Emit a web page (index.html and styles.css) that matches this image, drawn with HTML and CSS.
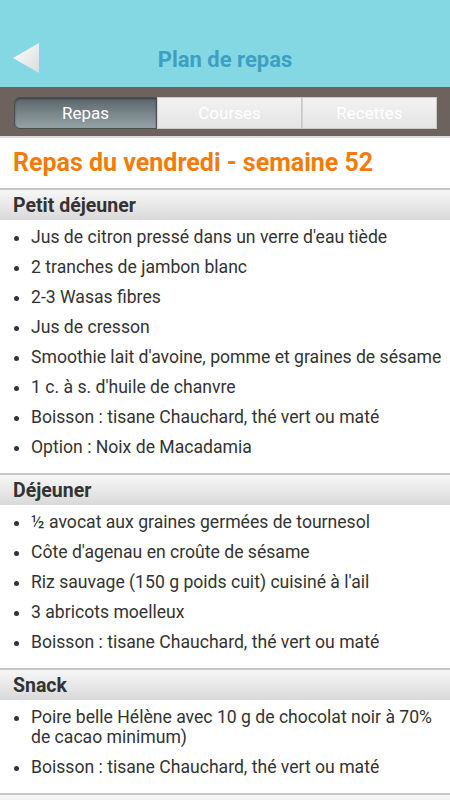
FILE: index.html
```html
<!DOCTYPE html>
<html lang="fr">
<head>
<meta charset="utf-8">
<title>Plan de repas</title>
<link rel="stylesheet" href="styles.css">
</head>
<body>
<header class="topbar">
  <svg class="back" width="28" height="32" viewBox="0 0 28 32" aria-hidden="true">
    <defs>
      <linearGradient id="tri" x1="0" y1="0" x2="1" y2="1">
        <stop offset="0" stop-color="#ffffff"/>
        <stop offset="1" stop-color="#d9dcdc"/>
      </linearGradient>
    </defs>
    <polygon points="1,16 27,1 27,31" fill="url(#tri)"/>
  </svg>
  <h1 class="apptitle">Plan de repas</h1>
</header>
<nav class="tabbar">
  <div class="tabs">
    <div class="tab active">Repas</div>
    <div class="tab">Courses</div>
    <div class="tab">Recettes</div>
  </div>
</nav>
<main class="content">
  <h2 class="daytitle">Repas du vendredi - semaine 52</h2>
  <section class="meal">
    <h3 class="mealhead">Petit déjeuner</h3>
    <ul class="items">
      <li>Jus de citron pressé dans un verre d'eau tiède</li>
      <li>2 tranches de jambon blanc</li>
      <li>2-3 Wasas fibres</li>
      <li>Jus de cresson</li>
      <li>Smoothie lait d'avoine, pomme et graines de sésame</li>
      <li>1 c. à s. d'huile de chanvre</li>
      <li>Boisson : tisane Chauchard, thé vert ou maté</li>
      <li>Option : Noix de Macadamia</li>
    </ul>
  </section>
  <section class="meal">
    <h3 class="mealhead">Déjeuner</h3>
    <ul class="items">
      <li>½ avocat aux graines germées de tournesol</li>
      <li>Côte d'agenau en croûte de sésame</li>
      <li>Riz sauvage (150 g poids cuit) cuisiné à l'ail</li>
      <li>3 abricots moelleux</li>
      <li>Boisson : tisane Chauchard, thé vert ou maté</li>
    </ul>
  </section>
  <section class="meal">
    <h3 class="mealhead">Snack</h3>
    <ul class="items">
      <li>Poire belle Hélène avec 10 g de chocolat noir à 70% de cacao minimum)</li>
      <li>Boisson : tisane Chauchard, thé vert ou maté</li>
    </ul>
  </section>
  <section class="meal">
    <div class="mealhead"></div>
  </section>
</main>
</body>
</html>
```
FILE: styles.css
```css
* { box-sizing: border-box; }
html, body { margin: 0; padding: 0; }
body {
  width: 450px;
  height: 800px;
  overflow: hidden;
  background: #ffffff;
  font-family: Roboto, "Noto Sans", sans-serif;
}
.topbar {
  height: 87px;
  background: #84d8e3;
  display: flex;
  align-items: flex-end;
  padding: 0 0 12px 12px;
  position: relative;
}
.back {
  display: block;
  margin-bottom: 1px;
}
.apptitle {
  position: absolute;
  left: 0;
  right: 0;
  top: 45px;
  margin: 0;
  text-align: center;
  font-size: 22px;
  line-height: 30px;
  font-weight: bold;
  color: #3d9fc1;
}
.tabbar {
  height: 51px;
  background: #6c625e;
  padding: 10px 13px 0 14px;
  border-bottom: 2px solid #dedede;
}
.tabs {
  display: flex;
  height: 32px;
}
.tab {
  flex: 1 1 0;
  display: flex;
  align-items: center;
  justify-content: center;
  font-size: 17px;
  color: #ffffff;
  background: linear-gradient(#f2f2f2, #e4e4e4);
  border: 1px solid #c9c9c9;
}
.tab + .tab { border-left: 1px solid #d2d2d2; }
.tab.active {
  flex: 0 0 143px;
  background: linear-gradient(#5b666b, #96a3a6);
  border: 1px solid #4a4f52;
  border-radius: 6px 0 0 6px;
  box-shadow: inset 0 1px 2px rgba(0,0,0,0.4);
}
.tab:nth-child(2) { flex: 0 0 145px; }
.daytitle {
  margin: 0;
  padding: 10px 13px 0;
  height: 50px;
  font-size: 25px;
  line-height: 30px;
  font-weight: bold;
  color: #f07c0c;
}
.meal { margin: 0; }
.mealhead {
  margin: 0;
  height: 32px;
  border-top: 2px solid #c7c7c7;
  background: linear-gradient(#f7f7f7, #d9d9d9);
  padding: 0 13px;
  font-size: 19.5px;
  line-height: 31px;
  font-weight: bold;
  color: #333333;
}
.items {
  list-style: none;
  margin: 0;
  padding: 2px 0 11px;
}
.items li {
  position: relative;
  padding: 5px 8px 5px 31px;
  font-size: 17.6px;
  line-height: 20px;
  color: #333333;
}
.items li::before {
  content: "";
  position: absolute;
  left: 14px;
  top: 14px;
  width: 5px;
  height: 5px;
  border-radius: 50%;
  background: #333333;
}
```
